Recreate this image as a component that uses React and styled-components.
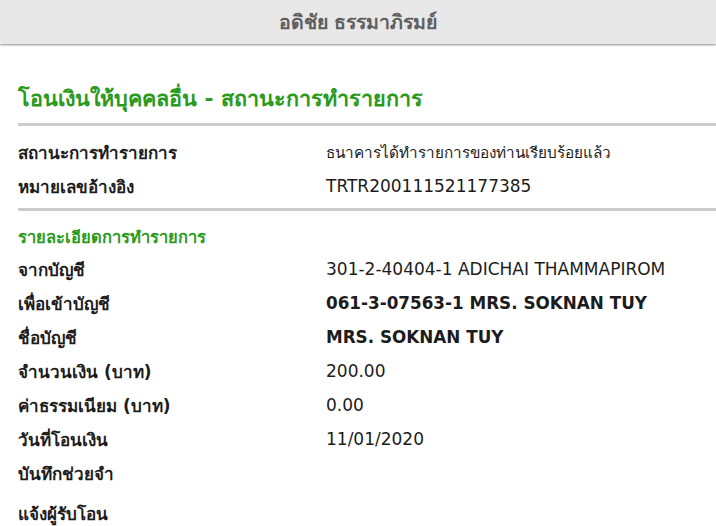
import React from 'react';
import styled, { createGlobalStyle } from 'styled-components';

const GlobalStyle = createGlobalStyle`
  body {
    margin: 0;
    background: #fff;
    font-family: Tahoma, "DejaVu Sans", "Noto Sans", sans-serif;
    color: #1c1c1c;
  }
`;

const Header = styled.div`
  height: 44px;
  background: #e8e8e8;
  box-shadow: 0 1px 2px rgba(0, 0, 0, 0.45);
  display: flex;
  align-items: center;
  justify-content: center;
  font-size: 19.5px;
  font-weight: bold;
  color: #5e5e5e;
`;

const Content = styled.div`
  padding: 32px 0 0 18px;
`;

const Title = styled.h2`
  margin: 0;
  height: 44px;
  display: flex;
  align-items: center;
  font-size: 21.5px;
  font-weight: bold;
  color: #2a9a1c;
`;

const Divider = styled.div`
  height: 3px;
  background: #cccccc;
  margin: ${(p) => p.margin || '0'};
`;

const Section = styled.div`
  display: flex;
  height: 30px;
  align-items: center;
  font-size: 16.5px;
  font-weight: bold;
  color: #2a9a1c;
`;

const Row = styled.div`
  display: grid;
  grid-template-columns: 308px 1fr;
  align-items: center;
  height: ${(p) => p.h || 34}px;
  font-size: 17px;
`;

const Label = styled.div`
  font-weight: bold;
`;

const Value = styled.div`
  font-size: ${(p) => (p.thai ? 15.3 : p.strong ? 16.8 : 17)}px;
  font-weight: ${(p) => (p.strong ? 'bold' : 'normal')};
`;

const statusRows = [
  ['สถานะการทำรายการ', 'ธนาคารได้ทำรายการของท่านเรียบร้อยแล้ว', true],
  ['หมายเลขอ้างอิง', 'TRTR200111521177385'],
];

const detailRows = [
  ['จากบัญชี', '301-2-40404-1 ADICHAI THAMMAPIROM'],
  ['เพื่อเข้าบัญชี', '061-3-07563-1 MRS. SOKNAN TUY', true],
  ['ชื่อบัญชี', 'MRS. SOKNAN TUY', true],
  ['จำนวนเงิน (บาท)', '200.00'],
  ['ค่าธรรมเนียม (บาท)', '0.00'],
  ['วันที่โอนเงิน', '11/01/2020'],
  ['บันทึกช่วยจำ', ''],
];

export default function App() {
  return (
    <>
      <GlobalStyle />
      <Header>อดิชัย ธรรมาภิรมย์</Header>
      <Content>
        <Title>โอนเงินให้บุคคลอื่น - สถานะการทำรายการ</Title>
        <Divider margin="3px 0 9px" />
        {statusRows.map(([l, v, t]) => (
          <Row key={l}>
            <Label>{l}</Label>
            <Value thai={t}>{v}</Value>
          </Row>
        ))}
        <Divider margin="5px 0 11px" />
        <Section>รายละเอียดการทำรายการ</Section>
        {detailRows.map(([l, v, s]) => (
          <Row key={l}>
            <Label>{l}</Label>
            <Value strong={s}>{v}</Value>
          </Row>
        ))}
        <Row h={46}>
          <Label>แจ้งผู้รับโอน</Label>
          <Value />
        </Row>
      </Content>
    </>
  );
}
